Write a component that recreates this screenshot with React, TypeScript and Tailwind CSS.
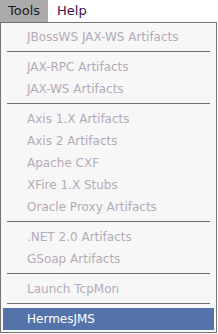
import React from 'react';

type Entry = { label: string; active?: boolean } | 'sep';

const entries: Entry[] = [
  { label: 'JBossWS JAX-WS Artifacts' },
  'sep',
  { label: 'JAX-RPC Artifacts' },
  { label: 'JAX-WS Artifacts' },
  'sep',
  { label: 'Axis 1.X Artifacts' },
  { label: 'Axis 2 Artifacts' },
  { label: 'Apache CXF' },
  { label: 'XFire 1.X Stubs' },
  { label: 'Oracle Proxy Artifacts' },
  'sep',
  { label: '.NET 2.0 Artifacts' },
  { label: 'GSoap Artifacts' },
  'sep',
  { label: 'Launch TcpMon' },
  'sep',
  { label: 'HermesJMS', active: true },
];

export default function App() {
  return (
    <div
      className="w-[218px] h-[334px] bg-white overflow-hidden"
      style={{ fontFamily: '"DejaVu Sans", sans-serif' }}
    >
      {/* Menu bar */}
      <div className="flex h-[22px] text-[13px] leading-[22px]">
        <div className="w-[48px] bg-[#ababab] pl-[8px] text-[#1a1a1a]">Tools</div>
        <div className="pl-[9px] text-[#3c0f4a]">Help</div>
      </div>

      {/* Dropdown */}
      <div className="w-[217px] h-[311px] border border-[#747474] bg-[#f7f7f7] px-[2px] pt-[3px] pb-px">
        {entries.map((e, i) =>
          e === 'sep' ? (
            <div key={i} className="h-[8px] pt-[3px] px-[4px]">
              <div className="h-px bg-[#6f6f6f]" />
            </div>
          ) : (
            <div
              key={i}
              className={`h-[22px] pl-[24px] text-[12px] leading-[22px] whitespace-nowrap ${
                e.active ? 'bg-[#5473ab] text-white' : 'text-[#b4abb8]'
              }`}
            >
              {e.label}
            </div>
          )
        )}
      </div>
    </div>
  );
}
